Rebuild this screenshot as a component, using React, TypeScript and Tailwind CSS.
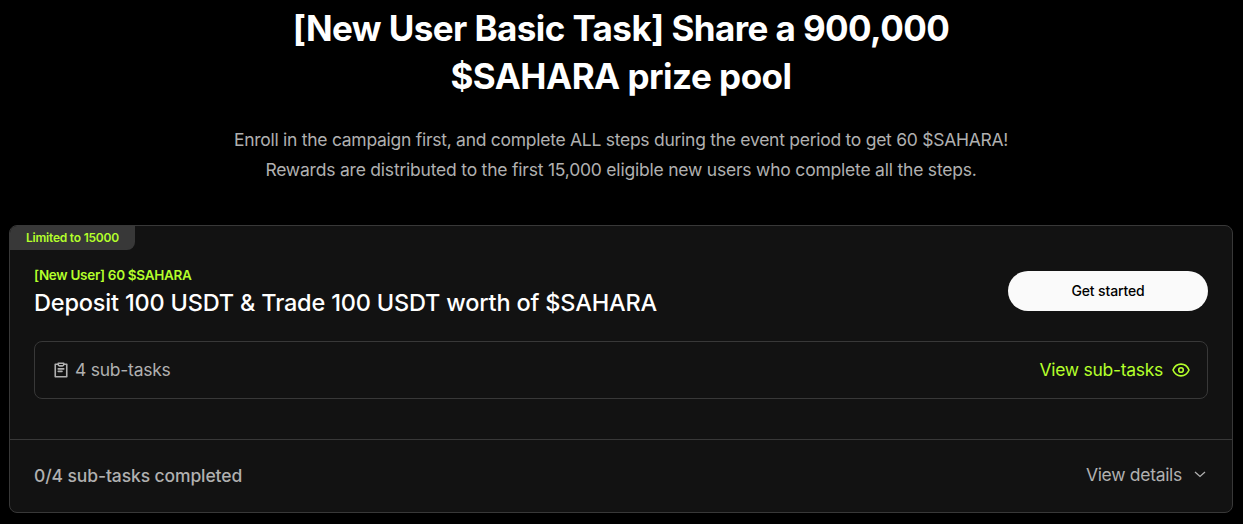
function ClipboardIcon() {
  return (
    <svg width="14" height="16" viewBox="0 0 14 16" fill="none" stroke="currentColor" strokeWidth="1.6">
      <path d="M4 2.25H1.25V14.75H12.75V2.25H10" strokeLinejoin="round" />
      <path d="M4.25 1.25H9.75V2.6Q9.75 3.9 8.4 3.9H5.6Q4.25 3.9 4.25 2.6Z" strokeLinejoin="round" />
      <path d="M4.25 6.9H9.75M4.25 9.4H8" strokeLinecap="round" />
    </svg>
  );
}

function EyeIcon() {
  return (
    <svg width="18" height="14" viewBox="0 0 18 14" fill="none" stroke="currentColor" strokeWidth="1.6">
      <path d="M1 7C2.6 3.2 5.4 1.1 9 1.1S15.4 3.2 17 7C15.4 10.8 12.6 12.9 9 12.9S2.6 10.8 1 7Z" strokeLinejoin="round" />
      <circle cx="9" cy="7" r="2.3" />
    </svg>
  );
}

function ChevronIcon() {
  return (
    <svg width="12" height="7" viewBox="0 0 12 7" fill="none" stroke="currentColor" strokeWidth="1.3">
      <path d="M1 1L6 5.5L11 1" />
    </svg>
  );
}

function Header() {
  return (
    <header className="flex flex-col items-center text-center">
      <h1 className="text-[35px] leading-[48px] font-bold text-white">
        <span className="block whitespace-nowrap tracking-[-0.58px]">[New User Basic Task] Share a 900,000</span>
        <span className="block whitespace-nowrap tracking-[-0.5px]">$SAHARA prize pool</span>
      </h1>
      <p className="mt-[25px] text-[17.5px] leading-[30px] text-[#b0b0b0]">
        <span className="block whitespace-nowrap tracking-[-0.27px]">
          Enroll in the campaign first, and complete ALL steps during the event period to get 60 $SAHARA!
        </span>
        <span className="block whitespace-nowrap tracking-[-0.21px]">
          Rewards are distributed to the first 15,000 eligible new users who complete all the steps.
        </span>
      </p>
    </header>
  );
}

function TaskCard() {
  return (
    <section className="mt-10 flex h-[288px] flex-col overflow-hidden rounded-lg border border-[#383838] bg-[#121212]">
      <div className="flex h-6 w-[125px] items-center rounded-br-lg bg-[#383838] pl-4 text-[12px] font-semibold whitespace-nowrap text-[#b4ff2b]">
        <span className="tracking-[-0.22px]">Limited to 15000</span>
      </div>
      <div className="flex h-[91px] items-start justify-between px-6">
        <div className="pt-[15px] whitespace-nowrap">
          <p className="text-[13.5px] leading-5 font-semibold tracking-[-0.3px] text-[#b4ff2b]">[New User] 60 $SAHARA</p>
          <h2 className="text-[23.5px] leading-9 font-medium tracking-[-0.18px] text-white">
            Deposit 100 USDT &amp; Trade 100 USDT worth of $SAHARA
          </h2>
        </div>
        <button className="mt-[21px] h-10 w-[200px] rounded-full bg-[#fafafa] pb-px text-[14px] font-medium tracking-[-0.15px] text-black">
          Get started
        </button>
      </div>
      <div className="mx-6 flex h-[58px] shrink-0 items-center justify-between rounded-lg border border-[#383838] pr-[17px] pl-[19px] text-[17.5px] leading-[26px] whitespace-nowrap">
        <div className="flex items-center gap-[7px] text-[#b0b0b0]">
          <ClipboardIcon />
          <span className="tracking-[-0.25px]">4 sub-tasks</span>
        </div>
        <button className="flex items-center gap-[9px] text-[#b4ff2b]">
          <span className="tracking-[-0.28px]">View sub-tasks</span>
          <EyeIcon />
        </button>
      </div>
      <div className="mt-10 flex flex-1 items-center justify-between border-t border-[#383838] px-6 text-[17.5px] leading-[26px] whitespace-nowrap text-[#b0b0b0]">
        <span className="font-medium tracking-[-0.11px]">0/4 sub-tasks completed</span>
        <button className="flex items-center gap-3 pr-[2px] pb-[2px]">
          <span className="tracking-[-0.3px]">View details</span>
          <span className="pb-px">
            <ChevronIcon />
          </span>
        </button>
      </div>
    </section>
  );
}

export default function App() {
  return (
    <main className="h-[524px] w-[1243px] overflow-hidden bg-black pt-1 pr-[10px] pl-[9px] font-['Inter','Liberation_Sans',sans-serif]">
      <Header />
      <TaskCard />
    </main>
  );
}
